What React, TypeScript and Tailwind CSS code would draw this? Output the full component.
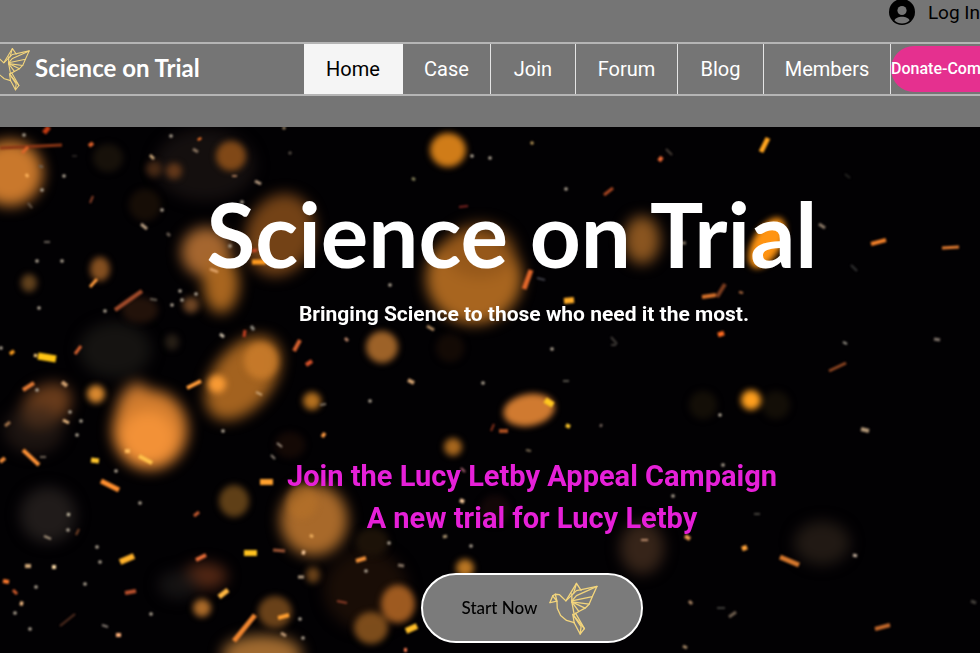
import React from "react";

const links = [
  { label: "Home", width: "w-[99px]", active: true },
  { label: "Case", width: "w-[88px]" },
  { label: "Join", width: "w-[85px]" },
  { label: "Forum", width: "w-[102px]" },
  { label: "Blog", width: "w-[86px]" },
  { label: "Members", width: "w-[127px]" },
];

// cx, cy, rx, ry, rotation, colour, opacity
type Glow = [number, number, number, number, number, string, number];

const softGlows: Glow[] = [
  [10, 173, 33, 33, 0, "#c9782c", 1],
  [205, 165, 50, 36, 0, "#1c1614", 0.7],
  [280, 235, 34, 42, 20, "#9a581d", 0.75],
  [206, 252, 25, 25, 0, "#a5662f", 1],
  [221, 284, 18, 29, 0, "#a8651f", 1],
  [474, 278, 48, 46, 0, "#a8651f", 1],
  [480, 250, 36, 28, 0, "#8a5018", 0.6],
  [243, 378, 30, 48, 38, "#a3621f", 1],
  [134, 412, 18, 30, 10, "#c87832", 0.9],
  [150, 430, 38, 40, 0, "#d07b2d", 1],
  [148, 438, 28, 27, 0, "#f59338", 0.9],
  [314, 520, 34, 36, 0, "#a8692a", 1],
  [46, 406, 28, 20, -35, "#7a4520", 0.85],
  [34, 430, 30, 24, 0, "#2d2019", 0.6],
  [48, 515, 28, 28, 0, "#231e1d", 0.9],
  [115, 350, 36, 28, 0, "#171513", 0.9],
  [262, 655, 40, 20, 0, "#a06a30", 1],
  [642, 548, 22, 26, 0, "#3c281c", 0.9],
  [822, 543, 28, 22, 0, "#211914", 1],
  [205, 576, 22, 13, 0, "#5a2a16", 0.9],
  [178, 585, 20, 14, 0, "#191717", 0.8],
  [366, 590, 42, 40, 0, "#1f1008", 0.8],
  [642, 240, 18, 24, 0, "#8a5520", 1],
];

const glows: Glow[] = [
  [448, 150, 18, 17, 0, "#d07c18", 1],
  [231, 156, 15, 15, 0, "#8c4f18", 0.9],
  [154, 169, 8, 8, 0, "#4d2c16", 0.9],
  [174, 171, 8, 8, 0, "#6a3c1b", 0.9],
  [108, 158, 15, 14, 0, "#1a130b", 0.9],
  [145, 205, 16, 16, 0, "#1c1008", 0.8],
  [100, 269, 10, 12, 0, "#8b5322", 0.95],
  [29, 283, 8, 9, 0, "#6b4820", 0.9],
  [191, 305, 8, 8, 0, "#7a4d28", 0.9],
  [140, 310, 18, 13, 0, "#2a170c", 0.8],
  [172, 342, 7, 8, 0, "#30251a", 0.8],
  [261, 361, 17, 18, 0, "#cd7e2c", 0.8],
  [217, 384, 9, 9, 0, "#f89a34", 1],
  [96, 394, 9, 9, 0, "#d8882f", 1],
  [312, 401, 9, 9, 0, "#b4701f", 1],
  [382, 347, 16, 16, 0, "#a5672a", 0.95],
  [450, 348, 14, 14, 0, "#180c06", 0.8],
  [529, 410, 26, 16, -10, "#d07a30", 1],
  [453, 447, 9, 9, 0, "#b06d20", 0.95],
  [465, 568, 9, 9, 0, "#c47c25", 0.95],
  [767, 243, 14, 28, 30, "#ff9412", 1],
  [751, 400, 10, 10, 0, "#ff9f1e", 1],
  [703, 405, 14, 14, 0, "#150f08", 0.9],
  [776, 405, 14, 14, 0, "#150f08", 0.9],
  [234, 501, 15, 16, 0, "#644218", 0.95],
  [302, 502, 15, 17, 0, "#b97428", 0.5],
  [202, 608, 9, 9, 0, "#b4702b", 0.95],
  [275, 612, 17, 16, 0, "#6f441a", 0.95],
  [313, 575, 7, 8, 0, "#6f441a", 0.95],
  [398, 604, 17, 19, 0, "#a55f22", 0.95],
  [371, 628, 17, 16, 0, "#83501c", 0.95],
  [372, 542, 17, 14, 0, "#1f1409", 0.9],
  [290, 445, 15, 13, 0, "#190b06", 0.8],
  [495, 510, 15, 15, 0, "#170909", 0.8],
];

// x1, y1, x2, y2, thickness, colour
type Spark = [number, number, number, number, number, string];

const sparks: Spark[] = [
  [44, 133, 49, 127, 5, "#c33a12"],
  [0, 148, 62, 145, 3, "#8a3515"],
  [22, 153, 28, 147, 3, "#e0662a"],
  [89, 146, 93, 143, 4, "#e0602a"],
  [150, 155, 154, 159, 3, "#c9a67a"],
  [193, 149, 198, 152, 3, "#8a7460"],
  [199, 138, 200, 140, 4, "#ff7a2a"],
  [232, 176, 237, 176, 2, "#a87a5a"],
  [255, 181, 261, 184, 3, "#b59a80"],
  [283, 127, 285, 129, 3, "#a89070"],
  [289, 152, 291, 154, 3, "#5a5148"],
  [26, 174, 28, 177, 3, "#ffb45c"],
  [90, 203, 93, 196, 2, "#8a4028"],
  [39, 166, 43, 167, 2, "#6d655c"],
  [72, 156, 77, 156, 2, "#282422"],
  [28, 203, 32, 208, 2, "#706050"],
  [531, 144, 533, 142, 3, "#c9a560"],
  [412, 178, 415, 180, 3, "#85805a"],
  [459, 207, 468, 206, 2, "#7d2420"],
  [604, 195, 613, 188, 3, "#a84622"],
  [659, 161, 662, 157, 4, "#f06a35"],
  [666, 149, 672, 155, 2, "#4a4038"],
  [761, 152, 768, 138, 5, "#ffa31f"],
  [845, 174, 850, 178, 2, "#252522"],
  [141, 224, 147, 229, 3, "#b59b80"],
  [167, 233, 170, 236, 3, "#675b50"],
  [44, 242, 50, 242, 2, "#6a625a"],
  [90, 287, 97, 279, 3, "#ff9a3c"],
  [115, 310, 142, 291, 4, "#9f4a2a"],
  [150, 299, 157, 300, 2, "#6c6458"],
  [252, 262, 266, 262, 5, "#ff9a1f"],
  [252, 251, 257, 250, 3, "#d04a2a"],
  [210, 269, 218, 272, 2, "#f0b47a"],
  [34, 355, 37, 356, 3, "#ffd080"],
  [38, 356, 56, 359, 7, "#ffc414"],
  [11, 351, 13, 354, 5, "#ff9f1f"],
  [75, 354, 81, 346, 3, "#d5602f"],
  [23, 390, 34, 383, 4, "#e27a35"],
  [62, 382, 67, 386, 4, "#d0a070"],
  [187, 388, 201, 381, 4, "#ff9a38"],
  [244, 337, 245, 330, 3, "#c03f22"],
  [220, 334, 224, 337, 3, "#c9bca8"],
  [251, 326, 254, 330, 3, "#908c82"],
  [294, 351, 300, 340, 4, "#d5602f"],
  [306, 365, 312, 361, 4, "#d5502a"],
  [256, 392, 262, 395, 2, "#c8a070"],
  [320, 405, 326, 404, 2, "#84786a"],
  [63, 420, 69, 423, 3, "#e8b880"],
  [5, 426, 10, 422, 3, "#a0714a"],
  [524, 289, 531, 270, 5, "#e0662a"],
  [564, 301, 574, 300, 6, "#ffac28"],
  [537, 278, 545, 280, 2, "#404048"],
  [345, 338, 348, 341, 3, "#b88468"],
  [408, 380, 414, 383, 4, "#d0a070"],
  [427, 326, 434, 330, 3, "#b08a60"],
  [611, 337, 617, 344, 2, "#403c38"],
  [611, 345, 616, 345, 2, "#403c38"],
  [563, 381, 569, 381, 2, "#58544c"],
  [545, 400, 553, 405, 6, "#ffc81f"],
  [566, 425, 570, 427, 4, "#ffc82a"],
  [499, 431, 508, 431, 4, "#a84c20"],
  [491, 431, 494, 424, 2, "#84301a"],
  [600, 425, 602, 426, 3, "#8f7c70"],
  [680, 243, 686, 243, 3, "#7d7060"],
  [702, 297, 716, 295, 4, "#d5702a"],
  [717, 297, 725, 284, 4, "#7c3c1e"],
  [739, 292, 743, 293, 2, "#c07848"],
  [718, 335, 724, 333, 5, "#ff6a20"],
  [819, 224, 825, 228, 3, "#8f7c6a"],
  [871, 244, 886, 240, 4, "#f07e28"],
  [942, 248, 959, 247, 3, "#e07a30"],
  [829, 371, 846, 363, 3, "#8f4622"],
  [843, 342, 847, 344, 2, "#99948a"],
  [934, 339, 940, 340, 3, "#7f746c"],
  [851, 265, 857, 271, 2, "#343434"],
  [861, 429, 869, 431, 4, "#b39878"],
  [780, 557, 799, 565, 5, "#d5772c"],
  [742, 549, 747, 547, 5, "#ffa23a"],
  [685, 536, 690, 539, 4, "#f0a050"],
  [853, 555, 857, 556, 3, "#c0ac9a"],
  [875, 629, 890, 625, 4, "#c0662a"],
  [689, 601, 692, 604, 3, "#b08a68"],
  [729, 617, 736, 612, 3, "#706050"],
  [717, 608, 725, 608, 2, "#403e3a"],
  [683, 646, 687, 648, 3, "#aa8c6a"],
  [754, 514, 760, 514, 2, "#48443e"],
  [971, 601, 976, 603, 3, "#45413c"],
  [23, 450, 39, 465, 4, "#ff9236"],
  [0, 462, 5, 458, 4, "#f08a38"],
  [40, 457, 46, 457, 2, "#706458"],
  [91, 460, 99, 461, 5, "#ffc42a"],
  [125, 451, 130, 451, 4, "#ffba5a"],
  [139, 456, 152, 463, 4, "#ffc24a"],
  [101, 481, 119, 490, 5, "#ff8e2e"],
  [260, 482, 273, 482, 6, "#ffa02e"],
  [322, 434, 325, 436, 5, "#ff9a42"],
  [277, 443, 282, 447, 2, "#a09080"],
  [271, 455, 275, 459, 2, "#908478"],
  [194, 516, 199, 512, 3, "#c55a30"],
  [67, 514, 70, 515, 3, "#c8c0a8"],
  [44, 536, 51, 539, 2, "#aa9880"],
  [76, 535, 79, 529, 2, "#7c4628"],
  [120, 562, 134, 556, 6, "#ffb12a"],
  [196, 560, 206, 555, 4, "#e66c38"],
  [244, 553, 257, 553, 6, "#ffc21f"],
  [273, 550, 285, 551, 3, "#9d5434"],
  [302, 552, 305, 553, 4, "#ffd0a0"],
  [25, 566, 31, 566, 4, "#d0a878"],
  [52, 567, 56, 567, 4, "#ffdca8"],
  [3, 581, 9, 582, 4, "#ff7a2e"],
  [13, 590, 17, 594, 3, "#d55c2c"],
  [20, 603, 23, 604, 4, "#ffc48a"],
  [125, 593, 136, 591, 4, "#b84f2c"],
  [219, 597, 228, 590, 5, "#ffb640"],
  [60, 626, 75, 614, 2, "#553020"],
  [102, 625, 108, 627, 2, "#8a8078"],
  [116, 635, 121, 635, 4, "#ffb078"],
  [234, 641, 255, 615, 5, "#f0852f"],
  [278, 618, 289, 615, 4, "#ff9e30"],
  [281, 633, 286, 636, 3, "#c09c78"],
  [298, 577, 304, 577, 3, "#b09a80"],
  [356, 561, 366, 558, 4, "#f09038"],
  [398, 565, 404, 566, 3, "#857464"],
  [443, 537, 447, 536, 3, "#aa9470"],
  [460, 500, 464, 502, 4, "#ffd0a0"],
  [461, 468, 465, 472, 2, "#b06878"],
  [337, 601, 347, 603, 2, "#903f28"],
  [406, 631, 417, 626, 6, "#ffbe28"],
  [404, 650, 407, 650, 4, "#f07850"],
  [526, 450, 531, 451, 2, "#807058"],
  [641, 540, 648, 540, 2, "#c09070"],
  [310, 535, 313, 537, 3, "#f0b060"],
];

// tiny dots of light
const dots = [
  [64, 176], [42, 190], [242, 202], [490, 158], [171, 136], [24, 135], [162, 210],
  [37, 261], [62, 261], [180, 291], [196, 294], [182, 300], [172, 305], [105, 311],
  [39, 308], [1, 348], [37, 390], [70, 412], [81, 421], [77, 435], [230, 246],
  [552, 349], [483, 383], [370, 401], [720, 415], [390, 285], [223, 431], [116, 471],
  [140, 503], [68, 530], [97, 547], [100, 562], [85, 584], [36, 587], [151, 614],
  [30, 629], [15, 613], [303, 638], [300, 619], [366, 571], [389, 543], [471, 546],
  [673, 496], [723, 465], [566, 189], [472, 156],
];

const Embers = () => {
  const drawGlow = ([cx, cy, rx, ry, turn, color, opacity]: Glow, i: number) => (
    <ellipse
      key={i}
      cx={cx}
      cy={cy}
      rx={rx}
      ry={ry}
      fill={color}
      opacity={opacity}
      transform={`rotate(${turn} ${cx} ${cy})`}
    />
  );

  return (
    <svg
      className="absolute inset-0 h-full w-full"
      viewBox="0 127 980 526"
      preserveAspectRatio="xMidYMid slice"
      colorInterpolationFilters="sRGB"
      aria-hidden="true"
    >
      <defs>
        <filter id="soft" filterUnits="userSpaceOnUse" x="-50" y="80" width="1080" height="620">
          <feGaussianBlur stdDeviation="7" />
        </filter>
        <filter id="medium" filterUnits="userSpaceOnUse" x="-50" y="80" width="1080" height="620">
          <feGaussianBlur stdDeviation="3" />
        </filter>
        <filter id="light" filterUnits="userSpaceOnUse" x="-50" y="80" width="1080" height="620">
          <feGaussianBlur stdDeviation="1" />
        </filter>
      </defs>
      <g filter="url(#soft)">{softGlows.map(drawGlow)}</g>
      <g filter="url(#medium)">{glows.map(drawGlow)}</g>
      <g filter="url(#light)">
        {sparks.map(([x1, y1, x2, y2, size, color], i) => (
          <line key={i} x1={x1} y1={y1} x2={x2} y2={y2} stroke={color} strokeWidth={size} />
        ))}
        {dots.map(([cx, cy], i) => (
          <circle key={i} cx={cx} cy={cy} r="1.8" fill="#b3a898" />
        ))}
      </g>
    </svg>
  );
};

const Bird = ({ className }: { className: string }) => (
  <svg
    className={className}
    viewBox="694 483 148 160"
    fill="none"
    stroke="#f3d57c"
    strokeWidth="4"
    strokeLinejoin="round"
    strokeLinecap="round"
    aria-hidden="true"
  >
    <path d="M697 545 L705 525 L713 520 L725 521 L745 540 L777 487 L791 508" />
    <path d="M697 545 L718 541 L719 562 L729 584 L747 599 L770 606" />
    <path d="M705 525 L718 541 L713 520" />
    <path d="M745 540 L777 509 L839 496 L825 527 L763 540" />
    <path d="M777 487 L768 518" />
    <path d="M763 540 L777 524 L839 496" />
    <path d="M825 527 L815 550 L763 543" />
    <path d="M763 543 L803 562 L815 550" />
    <path d="M763 543 L784 572 L803 562" />
    <path d="M770 606 L788 640 L791 618 L766 581" />
    <path d="M763 518 L763 543 L770 581 L784 572" />
    <path d="M770 606 L766 581 L801 624 L788 640" />
    <path d="M774 577 L801 624" />
  </svg>
);

const Avatar = () => (
  <svg className="h-[26px] w-[26px] shrink-0" viewBox="0 0 26 26" aria-hidden="true">
    <circle cx="13" cy="12" r="13" fill="#000" />
    <circle cx="13" cy="10.5" r="4.6" fill="#757575" />
    <path d="M5.5 20.5 C7 15.5 19 15.5 20.5 20.5 C17 24.5 9 24.5 5.5 20.5 Z" fill="#757575" />
  </svg>
);

const Header = () => (
  <header className="overflow-hidden bg-[#757575] pb-[31px]">
    <div className="flex h-[42px] justify-end">
      <button
        type="button"
        className="flex h-[26px] items-center gap-[13px] whitespace-nowrap text-[19px] text-black"
      >
        <Avatar />
        Log In
      </button>
    </div>
    <div className="flex h-[54px] border-t-2 border-b-2 border-[#b5b5b5]">
      <a href="#" className="-ml-2.5 flex min-w-0 flex-1 items-center gap-[5px] text-white">
        <Bird className="h-11 w-10 shrink-0" />
        <span className="whitespace-nowrap pb-0.5 font-['Lato',sans-serif] text-2xl font-bold">
          Science on Trial
        </span>
      </a>
      <nav className="flex shrink-0 text-xl">
        {links.map((link) => (
          <a
            key={link.label}
            href="#"
            className={`${link.width} flex items-center justify-center border-r ${
              link.active
                ? "border-[#f5f5f5] bg-[#f5f5f5] text-black"
                : "border-[#e5e5e5] text-white"
            }`}
          >
            {link.label}
          </a>
        ))}
      </nav>
      <div className="flex w-[89px] shrink-0 items-center">
        <button
          type="button"
          className="h-[46px] w-[130px] shrink-0 whitespace-nowrap rounded-full bg-[#e5308f] text-left text-base font-medium text-white"
        >
          Donate-Com
        </button>
      </div>
    </div>
  </header>
);

const Hero = () => (
  <main className="relative flex-1 overflow-hidden bg-[#020103]">
    <Embers />
    <div className="relative flex flex-col items-center pt-[54px] pb-2.5 pl-[84px] text-center">
      <h1 className="mr-10 font-['Lato',sans-serif] text-[89px] leading-[106px] font-bold text-white">
        Science on Trial
      </h1>
      <p className="mt-[11px] mr-4 text-[21px] leading-8 font-bold text-white">
        Bringing Science to those who need it the most.
      </p>
      <h2 className="mt-[125px] text-[29px] leading-[42px] font-bold text-[#e620d8]">
        Join the Lucy Letby Appeal Campaign
        <br />A new trial for Lucy Letby
      </h2>
      <button
        type="button"
        className="mt-[34px] flex h-[70px] w-[222px] items-center justify-center gap-3 rounded-full border-2 border-white bg-[#7b7b7b] pr-1 font-['Lato',sans-serif] text-[17px] font-medium text-black"
      >
        Start Now
        <Bird className="h-[53px] w-[49px]" />
      </button>
    </div>
  </main>
);

const App = () => {
  return (
    <div className="flex min-h-screen flex-col bg-black font-['Roboto',sans-serif]">
      <Header />
      <Hero />
    </div>
  );
};

export default App;
